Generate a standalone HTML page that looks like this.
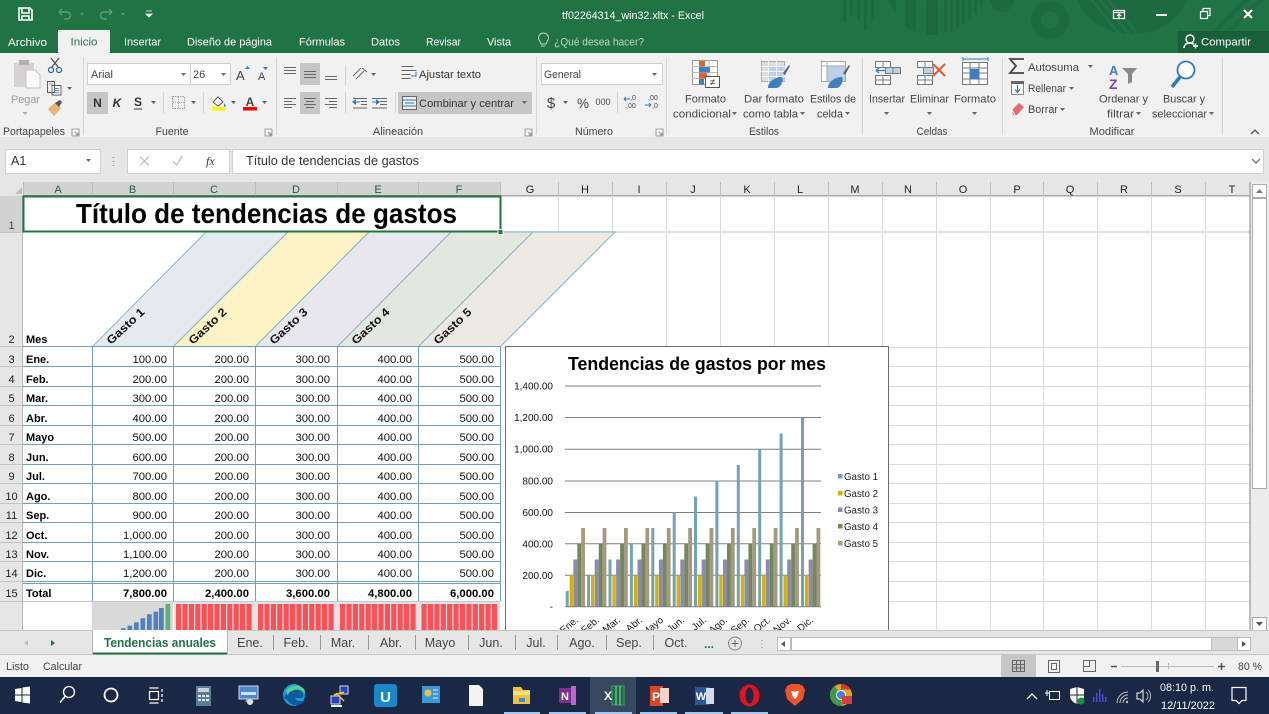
<!DOCTYPE html>
<html lang="es"><head><meta charset="utf-8"><title>Excel</title>
<style>
html,body{margin:0;padding:0;background:#fff;overflow:hidden}
svg{display:block;font-family:"Liberation Sans",Arial,sans-serif}
.r{font-size:11px;fill:#444}
.w{font-size:11px;fill:#fff}
.h{font-size:11px;fill:#222;text-anchor:middle}
.hs{font-size:11px;fill:#1d5f3b;text-anchor:middle}
.n{font-size:11.3px;fill:#111;text-anchor:end}
.b{font-size:11.3px;fill:#000;text-anchor:end;font-weight:bold}
.l{font-size:11px;fill:#000;font-weight:bold}
.g{font-size:11.5px;fill:#111;font-weight:bold}
.y{font-size:10px;fill:#111;text-anchor:end}
.c{font-size:10px;fill:#222;text-anchor:end}
.t{font-size:12.5px;fill:#444;text-anchor:middle}
.s{fill:none;stroke:#7a7a7a;stroke-width:1}
.bl{fill:none;stroke:#2b7cc0;stroke-width:1.2}
</style></head><body>
<svg width="1269" height="714" viewBox="0 0 1269 714" xmlns="http://www.w3.org/2000/svg">
<defs>
<path id="dd" d="M0 0h5l-2.500 3z" fill="#666"/>
<path id="lau" d="M0 0h7v7h-7zM3 3l3 3M6 3.500v2.500h-2.500" fill="none" stroke="#888" stroke-width=".8"/>
<g id="m">
<rect x="3.900" width="3.400" y="575.200" height="31.500" fill="#d4b200"/>
<rect x="7.600" width="4" y="559.500" height="47.200" fill="#8f8aab"/>
<rect x="11.600" width="3.900" y="543.700" height="63" fill="#728860"/>
<rect x="15.500" width="3.800" y="528" height="78.700" fill="#a59a7a"/>
</g>
<g id="rb"><rect width="5.200" y="604" height="26" fill="#fa5057"/></g>
<g id="rbs">
<use href="#rb"/><use href="#rb" x="6.400"/><use href="#rb" x="12.800"/><use href="#rb" x="19.200"/><use href="#rb" x="25.600"/><use href="#rb" x="32"/><use href="#rb" x="38.400"/><use href="#rb" x="44.800"/><use href="#rb" x="51.200"/><use href="#rb" x="57.600"/><use href="#rb" x="64"/><use href="#rb" x="70.400"/>
</g>
</defs>

<!-- title bar -->
<rect width="1269" height="53" fill="#217346"/>
<g fill="#1e6a40">
<rect x="843" width="3" height="22"/><rect x="850" width="3" height="15"/><rect x="857" width="3" height="20"/><rect x="864" width="3" height="30"/><rect x="871" width="3" height="18"/>
<path d="M888 0l8 13V0zM905 0h11v32l-11-5z"/>
<rect x="926" width="12" height="35" rx="2"/>
<rect x="944" width="3" height="32"/><rect x="950" width="3" height="31"/><rect x="956" width="3" height="28"/><rect x="962" width="3" height="24"/><rect x="968" width="3" height="20"/><rect x="974" width="3" height="14"/><rect x="980" width="2" height="6"/>
<circle cx="1002" cy="0" r="12"/>
<path d="M1077 0a58 50 0 0 0 110 0z"/>
<path d="M1190 53l53-53h6l-53 53zM1204 53l53-53h6l-53 53z" opacity=".9"/>
</g>
<circle cx="1050" cy="20" r="14" fill="none" stroke="#1e6a40" stroke-width="10"/>
<path d="M1092 0l32 40M1100 0l32 38M1108 0l30 34" stroke="#217346" stroke-width="2.500" fill="none"/>
<rect x="1178" y="31" width="91" height="22" fill="#19603a"/>
<!-- QAT -->
<g fill="none" stroke="#fff" stroke-width="1.600"><path d="M19 8h11l2 2v10H19z"/><path d="M22 8v5h7V8M22 20v-4h7v4"/></g>
<g fill="none" stroke="#5d9a78" stroke-width="1.500"><path d="M59 12l3-3M59 12l3 3M59 12h8a3.500 3.500 0 0 1 0 7h-3"/><path d="M112 12l-3-3M112 12l-3 3M112 12h-8a3.500 3.500 0 0 0 0 7h3"/></g>
<path d="M80 13h4l-2 2.500zM121 13h4l-2 2.500z" fill="#5d9a78"/>
<path d="M146 11h6M146 14h6l-3 3z" stroke="#fff" fill="#fff" stroke-width=".8"/>
<text x="562" y="19" class="w" textLength="142" lengthAdjust="spacingAndGlyphs">tf02264314_win32.xltx - Excel</text>
<!-- window controls -->
<g fill="none" stroke="#fff" stroke-width="1.200"><rect x="1113.500" y="10.500" width="11" height="8"/><path d="M1113 12.500h12M1119 18v-4M1117 16l2-2 2 2"/><path d="M1156 15h11" stroke-width="1.800"/><rect x="1200.500" y="11.500" width="7" height="7"/><path d="M1203 11v-2.500h7v7h-2"/></g>
<path d="M1244 10l8 8M1252 10l-8 8" stroke="#fff" stroke-width="2"/>
<!-- tabs -->
<rect x="58" y="30" width="52" height="23" fill="#f1f1f1"/>
<text x="8" y="46" class="w" textLength="39" lengthAdjust="spacingAndGlyphs">Archivo</text>
<text x="70.500" y="45.500" style="font-size:11px;fill:#217346" textLength="27" lengthAdjust="spacingAndGlyphs">Inicio</text>
<text x="124" y="45.500" class="w" textLength="37" lengthAdjust="spacingAndGlyphs">Insertar</text>
<text x="187" y="45.500" class="w" textLength="85" lengthAdjust="spacingAndGlyphs">Diseño de página</text>
<text x="299" y="45.500" class="w" textLength="46" lengthAdjust="spacingAndGlyphs">Fórmulas</text>
<text x="371" y="45.500" class="w" textLength="29" lengthAdjust="spacingAndGlyphs">Datos</text>
<text x="426" y="45.500" class="w" textLength="35" lengthAdjust="spacingAndGlyphs">Revisar</text>
<text x="487" y="45.500" class="w" textLength="24" lengthAdjust="spacingAndGlyphs">Vista</text>
<path d="M541 46h4M541 44c0-2-2.500-3-2.500-6a5 5 0 0 1 10 0c0 3-2.500 4-2.500 6z" fill="none" stroke="#bcd5c6" stroke-width="1"/>
<text x="554" y="45.500" style="font-size:11px;fill:#bcd5c6" textLength="90" lengthAdjust="spacingAndGlyphs">¿Qué desea hacer?</text>
<g fill="none" stroke="#fff" stroke-width="1.400"><circle cx="1190" cy="39" r="4"/><path d="M1184 48c0-3 2-5 6-5 2 0 3 .5 4 1.500M1193 46h5M1195.500 43.500v5"/></g>
<text x="1201" y="45.500" class="w" textLength="50" lengthAdjust="spacingAndGlyphs">Compartir</text>

<!-- ribbon -->
<rect y="53" width="1269" height="85" fill="#f1f1f1"/>
<rect y="137" width="1269" height="45" fill="#e6e6e6"/>
<path d="M83.500 57v78M276.500 57v78M536.500 57v78M666.500 57v78M862.500 57v78M1002.500 57v78M1222.500 57v78" stroke="#d5d5d5"/>
<!-- clipboard -->
<rect x="14" y="63" width="20" height="24" fill="#d6d2d2" rx="1"/><rect x="19" y="60" width="10" height="5" fill="#b4afaf"/>
<path d="M26 70h9l5 5v13H26z" fill="#fafafa" stroke="#c4c4c4"/>
<text x="11" y="103" style="font-size:11px;fill:#999" textLength="29" lengthAdjust="spacingAndGlyphs">Pegar</text>
<use href="#dd" x="22.500" y="112" opacity=".5"/>
<g fill="none" stroke="#2b6db0" stroke-width="1.300"><circle cx="51" cy="70" r="2.500"/><circle cx="59" cy="70" r="2.500"/></g><path d="M51.500 67.500L59 58M58.500 67.500L51 58" stroke="#555" stroke-width="1.300"/>
<path d="M47.500 81.500h7v11h-7zM52 85.500h9v9.500h-9z" fill="#fff" stroke="#555" stroke-width=".9"/><path d="M54 88.500h5M54 90.500h5M54 92.500h5M49 84h4" stroke="#2b6db0" stroke-width=".7"/>
<use href="#dd" x="67" y="87"/>
<path d="M48 109l8-7 5 6-7 8z" fill="#e8b573"/><path d="M55 103l5-3 2 2-3 5z" fill="#555"/>
<text x="3" y="135" class="r" textLength="62" lengthAdjust="spacingAndGlyphs">Portapapeles</text>
<use href="#lau" x="72" y="129"/>
<!-- font -->
<rect x="87.500" y="63.500" width="103" height="21" fill="#fff" stroke="#d0d0d0"/><rect x="190.500" y="63.500" width="40" height="21" fill="#fff" stroke="#d0d0d0"/>
<text x="91" y="78" class="r" textLength="22" lengthAdjust="spacingAndGlyphs">Arial</text><use href="#dd" x="181" y="73"/>
<text x="193" y="78" class="r">26</text><use href="#dd" x="221" y="73"/>
<text x="236" y="80" style="font-size:13px;fill:#444">A</text><path d="M245 69h5l-2.500-3z" fill="#2b7cc0"/>
<text x="258" y="80" style="font-size:11px;fill:#444">A</text><path d="M263 67h5l-2.500 3z" fill="#2b7cc0"/>
<rect x="87" y="92" width="21" height="22" fill="#c6c6c6"/>
<text x="97.500" y="107" style="font-size:12px;font-weight:bold;fill:#333;text-anchor:middle">N</text>
<text x="117" y="107" style="font-size:12px;font-weight:bold;font-style:italic;fill:#333;text-anchor:middle">K</text>
<text x="138" y="106" style="font-size:12px;font-weight:bold;fill:#333;text-anchor:middle">S</text><path d="M134 109h8" stroke="#333"/>
<use href="#dd" x="151" y="101"/><path d="M163.500 92v21M203.500 92v21" stroke="#d5d5d5"/>
<rect x="172.500" y="96.500" width="12" height="12" fill="none" stroke="#999" stroke-dasharray="1.500 1"/><path d="M178.500 97v11M173 102.500h11" stroke="#aaa" stroke-dasharray="1 1"/>
<use href="#dd" x="191" y="101"/>
<path d="M213 102l5-5 5 5-5 4z" fill="#fff" stroke="#555"/><path d="M224 103l2 3-2 1z" fill="#2b7cc0"/>
<rect x="212" y="107" width="14" height="3.500" fill="#ff0"/>
<use href="#dd" x="231" y="101"/>
<text x="250" y="106" style="font-size:12px;font-weight:bold;fill:#444;text-anchor:middle">A</text>
<rect x="243" y="107" width="14" height="3.500" fill="#f00"/>
<use href="#dd" x="262" y="101"/>
<text x="172" y="135" class="t" style="font-size:11px" textLength="33" lengthAdjust="spacingAndGlyphs">Fuente</text>
<use href="#lau" x="265" y="129"/>
<!-- alignment -->
<rect x="300" y="63" width="20" height="22" fill="#c6c6c6"/><rect x="300" y="92" width="20" height="22" fill="#c6c6c6"/>
<g stroke="#666" stroke-width="1" fill="none">
<path d="M284 67.500h12M284 70.500h12M284 73.500h12"/>
<path d="M304 71.500h12M304 74.500h12M304 77.500h12"/>
<path d="M325 76.500h12M325 79.500h12"/>
<path d="M284 98.500h12M284 101.500h8M284 104.500h12M284 107.500h8"/>
<path d="M304 98.500h12M306 101.500h8M304 104.500h12M306 107.500h8"/>
<path d="M325 98.500h12M329 101.500h8M325 104.500h12M329 107.500h8"/>
<path d="M353 76l8-8M356 79l8-8M362 68l5 4" />
<path d="M361 98.500h6M361 101.500h6M361 104.500h6M353 108h14M353 98.500h14"/>
<path d="M380 98.500h7M380 101.500h7M380 104.500h7M372 108h15M372 98.500h15"/>
<path d="M345.500 65v20M345.500 92v21M395.500 92v21" stroke="#d5d5d5"/>
</g>
<path d="M352 102l4-3v6zM356 101.500h4v1h-4zM372 101.500h4v1h-4zM380 102l-4-3v6z" fill="#2b7cc0"/>
<use href="#dd" x="371" y="73"/>
<g fill="none" stroke="#666"><path d="M401.500 66.500h12M401.500 70.500h15M401.500 74.500h9M401.500 78.500h9" /><path d="M411 76h5v-4" stroke="#2b7cc0"/></g>
<text x="419" y="78" style="font-size:11px;fill:#333" textLength="62" lengthAdjust="spacingAndGlyphs">Ajustar texto</text>
<rect x="398" y="92" width="134" height="22" fill="#c6c6c6"/>
<rect x="402.500" y="96.500" width="14" height="13" fill="#eee" stroke="#666"/><path d="M403 100h13M403 106h13M405 103h9" stroke="#2b7cc0" fill="none"/>
<text x="419" y="107" style="font-size:11px;fill:#333" textLength="95" lengthAdjust="spacingAndGlyphs">Combinar y centrar</text>
<use href="#dd" x="522" y="101" />
<text x="398" y="135" class="t" style="font-size:11px" textLength="50" lengthAdjust="spacingAndGlyphs">Alineación</text>
<use href="#lau" x="525" y="129"/>
<!-- number -->
<rect x="541.500" y="63.500" width="121" height="21" fill="#fff" stroke="#d0d0d0"/>
<text x="544" y="78" class="r" textLength="37" lengthAdjust="spacingAndGlyphs">General</text><use href="#dd" x="652" y="73"/>
<text x="551" y="108" style="font-size:15px;fill:#444;text-anchor:middle">$</text><use href="#dd" x="563" y="101"/>
<text x="583" y="108" style="font-size:13.500px;fill:#444;text-anchor:middle">%</text>
<text x="603" y="105" style="font-size:9px;fill:#444;text-anchor:middle">000</text>
<path d="M617.500 92v21" stroke="#d5d5d5"/>
<text x="630" y="100" style="font-size:7px;fill:#444">,0</text><text x="626" y="108" style="font-size:7px;fill:#444">,00</text><path d="M624 99h6M624 99l2-2M624 99l2 2" stroke="#2b7cc0" fill="none"/>
<text x="648" y="100" style="font-size:7px;fill:#444">,00</text><text x="652" y="108" style="font-size:7px;fill:#444">,0</text><path d="M645 105h6M651 105l-2-2M651 105l-2 2" stroke="#2b7cc0" fill="none"/>
<text x="594" y="135" class="t" style="font-size:11px" textLength="38" lengthAdjust="spacingAndGlyphs">Número</text>
<use href="#lau" x="656" y="129"/>
<!-- styles -->
<rect x="692.500" y="60.500" width="25" height="24" fill="#fff" stroke="#999"/>
<path d="M700 60.500v24M709 60.500v24M692 66.500h25M692 72.500h25M692 78.500h25" stroke="#bbb" fill="none"/>
<rect x="699" y="61" width="6" height="5.500" fill="#e0622f"/><rect x="699" y="67" width="11" height="5.500" fill="#3f7fbf"/><rect x="699" y="73" width="8" height="5.500" fill="#e0622f"/><rect x="699" y="79" width="5" height="5.500" fill="#3f7fbf"/>
<rect x="705.500" y="76.500" width="14" height="11" fill="#fff" stroke="#555"/><text x="712.500" y="85.500" style="font-size:10px;fill:#333;text-anchor:middle">≠</text>
<rect x="761.500" y="61.500" width="23" height="20" fill="#ddd" stroke="#aaa"/><rect x="769" y="67" width="16" height="14" fill="#bdd0e6"/><path d="M761 66.500h24M761 71.500h24M761 76.500h24M768.500 61v21M776.500 61v21" stroke="#fff" stroke-width=".7"/>
<path d="M783 73l6-8 1 1-5 9z" fill="#666"/><path d="M768 88c0-7 8-11 14-11 2 3-1 11-6 11z" fill="#3f7fbf"/>
<rect x="821.500" y="61.500" width="24" height="20" fill="#fff" stroke="#aaa"/><rect x="827" y="66" width="18" height="15" fill="#bdd0e6"/><path d="M821 66h25M827 61v20" stroke="#aaa"/>
<path d="M843 73l6-8 1 1-5 9z" fill="#666"/><path d="M828 88c0-7 8-11 14-11 2 3-1 11-6 11z" fill="#3f7fbf"/>
<g style="font-size:11px;fill:#444">
<text x="685" y="102.500" textLength="41" lengthAdjust="spacingAndGlyphs">Formato</text>
<text x="673" y="117.500" textLength="58" lengthAdjust="spacingAndGlyphs">condicional</text>
<text x="744" y="102.500" textLength="60" lengthAdjust="spacingAndGlyphs">Dar formato</text>
<text x="743" y="117.500" textLength="55" lengthAdjust="spacingAndGlyphs">como tabla</text>
<text x="810" y="102.500" textLength="46" lengthAdjust="spacingAndGlyphs">Estilos de</text>
<text x="817" y="117.500" textLength="26" lengthAdjust="spacingAndGlyphs">celda</text>
<text x="869" y="102.500" textLength="36" lengthAdjust="spacingAndGlyphs">Insertar</text>
<text x="910" y="102.500" textLength="39" lengthAdjust="spacingAndGlyphs">Eliminar</text>
<text x="954" y="102.500" textLength="42" lengthAdjust="spacingAndGlyphs">Formato</text>
<text x="1028" y="71" textLength="51" lengthAdjust="spacingAndGlyphs">Autosuma</text>
<text x="1028" y="92" textLength="38" lengthAdjust="spacingAndGlyphs">Rellenar</text>
<text x="1028" y="113" textLength="30" lengthAdjust="spacingAndGlyphs">Borrar</text>
<text x="1099" y="102.500" textLength="49" lengthAdjust="spacingAndGlyphs">Ordenar y</text>
<text x="1107" y="117.500" textLength="27" lengthAdjust="spacingAndGlyphs">filtrar</text>
<text x="1163" y="102.500" textLength="42" lengthAdjust="spacingAndGlyphs">Buscar y</text>
<text x="1152" y="117.500" textLength="55" lengthAdjust="spacingAndGlyphs">seleccionar</text>
</g>
<use href="#dd" x="732" y="112"/><use href="#dd" x="800" y="112"/><use href="#dd" x="845" y="112"/>
<use href="#dd" x="884" y="112"/><use href="#dd" x="927" y="112"/><use href="#dd" x="972" y="112"/>
<use href="#dd" x="1088" y="65"/><use href="#dd" x="1069" y="87"/><use href="#dd" x="1060" y="108"/>
<use href="#dd" x="1136" y="112"/><use href="#dd" x="1209" y="112"/>
<text x="764" y="135" class="t" style="font-size:11px" textLength="30" lengthAdjust="spacingAndGlyphs">Estilos</text>
<text x="932" y="135" class="t" style="font-size:11px" textLength="31" lengthAdjust="spacingAndGlyphs">Celdas</text>
<text x="1112" y="135" class="t" style="font-size:11px" textLength="45" lengthAdjust="spacingAndGlyphs">Modificar</text>
<path d="M1251 134l4-4 4 4" fill="none" stroke="#555" stroke-width="1.300"/>
<!-- cells icons -->
<g fill="#fff" stroke="#777"><rect x="875.500" y="61.500" width="15" height="6"/><path d="M883 61.500v6"/><rect x="875.500" y="75.500" width="15" height="9"/><path d="M883 75.500v9M875.500 80h15"/><rect x="885.500" y="67.500" width="15" height="6" fill="#bdd0e6"/><path d="M893 67.500v6"/>
<rect x="917.500" y="61.500" width="15" height="6"/><path d="M925 61.500v6"/><rect x="917.500" y="75.500" width="15" height="9"/><path d="M925 75.500v9M917.500 80h15"/><rect x="923.500" y="67.500" width="10" height="6" fill="#bdd0e6"/>
<rect x="962.500" y="62.500" width="25" height="22"/><path d="M970 62.500v22M979 62.500v22M962.500 68h25M962.500 73h25M962.500 79h25"/></g>
<path d="M873 70.500h9M873 70.500l3-2.500M873 70.500l3 2.500" stroke="#2b7cc0" fill="none" stroke-width="1.300" transform="translate(3)"/>
<path d="M933 64l12 12M945 64l-12 12" stroke="#e0592f" stroke-width="2"/>
<rect x="970" y="69" width="9" height="10" fill="#3f7fbf"/><path d="M963 59h25M963 57v4M988 57v4" stroke="#2b7cc0"/>
<!-- edit icons -->
<path d="M1024 59h-14l6 7-6 7h14" fill="none" stroke="#444" stroke-width="1.800"/>
<rect x="1011.500" y="81.500" width="12" height="13" fill="#fff" stroke="#888"/><rect x="1011" y="81" width="13" height="3" fill="#666"/><path d="M1017.500 85v7M1015 89.500l2.500 3 2.500-3" stroke="#2b7cc0" fill="none" stroke-width="1.200"/>
<path d="M1012 110l7-7 5 4-7 8h-4z" fill="#e86a6f"/><path d="M1012 110l3 5" stroke="#fff"/>
<text x="1109" y="75" style="font-size:13px;fill:#3f7fbf;font-weight:bold">A</text><text x="1109" y="89" style="font-size:14px;fill:#7a3fb5;font-weight:bold">Z</text>
<path d="M1122 68h15l-5 6v8l-4 2v-10z" fill="#8a8a8a"/>
<circle cx="1186" cy="70" r="8.500" fill="#fff" stroke="#2b7cc0" stroke-width="1.800"/><path d="M1180 77l-8 10" stroke="#2b7cc0" stroke-width="3.500"/>

<!-- formula bar -->
<rect x="5.500" y="149.500" width="95" height="24" fill="#fff" stroke="#d0d0d0"/>
<text x="11" y="165" style="font-size:12.500px;fill:#333">A1</text><use href="#dd" x="86" y="159" />
<path d="M113.500 157v1M113.500 161v1M113.500 165v1" stroke="#999" stroke-width="1.500"/>
<rect x="127.500" y="149.500" width="102" height="24" fill="#fff" stroke="#d0d0d0"/>
<path d="M140 156.500l9 9M149 156.500l-9 9" stroke="#bbb" stroke-width="1.200"/>
<path d="M173 161l3.500 4 6-9" stroke="#bbb" stroke-width="1.200" fill="none"/>
<text x="206" y="165" style="font-size:12px;font-style:italic;font-family:'Liberation Serif',serif;fill:#333">fx</text>
<rect x="232.500" y="149.500" width="1031" height="24" fill="#fff" stroke="#d0d0d0"/>
<text x="246" y="165" style="font-size:12.500px;fill:#333" textLength="173" lengthAdjust="spacingAndGlyphs">Título de tendencias de gastos</text>
<path d="M1252 159l4 4 4-4" fill="none" stroke="#666" stroke-width="1.200"/>

<!-- grid -->
<rect y="182" width="1269" height="14.500" fill="#e6e6e6"/>
<rect y="196" width="23" height="434" fill="#e6e6e6"/>
<rect x="1250" y="182" width="19" height="449" fill="#ececec"/>
<rect x="23" y="196" width="1227" height="434" fill="#fff"/>
<rect x="23" y="182" width="477" height="14" fill="#d2d2d2"/><rect y="196" width="23" height="36" fill="#d2d2d2"/>
<path d="M15 194h7v-7z" fill="#c0c0c0"/>
<path d="M23.500 196h1226M500 195.500h750" stroke="#a8a8a8"/>
<path d="M23 195.500h477" stroke="#8a8a8a"/>
<path d="M23.500 182v14M92.500 182v14M173.500 182v14M255.500 182v14M337.500 182v14M418.500 182v14M500.500 182v14M558.500 182v14M612.500 182v14M666.500 182v14M720.500 182v14M774.500 182v14M828.500 182v14M882.500 182v14M936.500 182v14M990.500 182v14M1043.500 182v14M1097.500 182v14M1151.500 182v14M1205.500 182v14" stroke="#bdbdbd"/>
<g stroke="#dcdcdc" fill="none">
<path d="M558.500 196v36M612.500 196v36M666.500 196v434M720.500 196v434M774.500 196v434M828.500 196v434M882.500 196v434M936.500 196v434M990.500 196v434M1043.500 196v434M1097.500 196v434M1151.500 196v434M1205.500 196v434"/>
<path d="M500 232h750" stroke="#e0e0e0" stroke-width="2"/>
<path d="M500 347.500h750M888 366.500h362M888 386.500h362M888 405.500h362M888 425.500h362M888 444.500h362M888 464.500h362M888 483.500h362M888 503.500h362M888 522.500h362M888 542.500h362M888 561.500h362M888 581.500h362M888 601.500h362"/>
</g>
<path d="M1250 182v449" stroke="#a8a8a8" stroke-width="1.500"/>
<!-- row headers -->
<path d="M0 232.500h23M0 346.500h23M0 366.500h23M0 386.500h23M0 405.500h23M0 425.500h23M0 444.500h23M0 464.500h23M0 483.500h23M0 503.500h23M0 522.500h23M0 542.500h23M0 561.500h23M0 581.500h23M0 601.500h23" stroke="#c4c4c4"/>
<path d="M22.500 196v434" stroke="#b5b5b5"/>
<g class="h">
<text class="hs" x="58" y="193">A</text><text class="hs" x="132.500" y="193">B</text><text class="hs" x="214" y="193">C</text><text class="hs" x="296" y="193">D</text><text class="hs" x="378" y="193">E</text><text class="hs" x="459" y="193">F</text>
<text class="h" x="530" y="193">G</text><text class="h" x="585" y="193">H</text><text class="h" x="639" y="193">I</text><text class="h" x="693" y="193">J</text><text class="h" x="747" y="193">K</text><text class="h" x="800" y="193">L</text><text class="h" x="855" y="193">M</text><text class="h" x="908" y="193">N</text><text class="h" x="963" y="193">O</text><text class="h" x="1017" y="193">P</text><text class="h" x="1070" y="193">Q</text><text class="h" x="1124" y="193">R</text><text class="h" x="1178" y="193">S</text><text class="h" x="1232" y="193">T</text>
<text class="hs" x="11.500" y="229">1</text><text class="h" x="11.500" y="343">2</text><text class="h" x="11.500" y="363">3</text><text class="h" x="11.500" y="383">4</text><text class="h" x="11.500" y="402">5</text><text class="h" x="11.500" y="422">6</text><text class="h" x="11.500" y="441">7</text><text class="h" x="11.500" y="461">8</text><text class="h" x="11.500" y="480">9</text><text class="h" x="11.500" y="500">10</text><text class="h" x="11.500" y="519">11</text><text class="h" x="11.500" y="539">12</text><text class="h" x="11.500" y="558">13</text><text class="h" x="11.500" y="577">14</text><text class="h" x="11.500" y="597">15</text>
</g>
<!-- parallelograms -->
<g stroke="#8eb4c2" stroke-width="1">
<path d="M92.500 346.500L206 232h82L173.500 346.500z" fill="#e4ebee"/>
<path d="M173.500 346.500L288 232h81L255.500 346.500z" fill="#fcf3c4"/>
<path d="M255.500 346.500L369 232h82L337.500 346.500z" fill="#e8e7ee"/>
<path d="M337.500 346.500L451 232h82L418.500 346.500z" fill="#e3e7df"/>
<path d="M418.500 346.500L533 232h82L500.500 346.500z" fill="#edeae3"/>
</g>
<text class="g" transform="translate(111 345) rotate(-43)" textLength="47" lengthAdjust="spacingAndGlyphs">Gasto 1</text>
<text class="g" transform="translate(193 345) rotate(-43)" textLength="47" lengthAdjust="spacingAndGlyphs">Gasto 2</text>
<text class="g" transform="translate(274 345) rotate(-43)" textLength="47" lengthAdjust="spacingAndGlyphs">Gasto 3</text>
<text class="g" transform="translate(356 345) rotate(-43)" textLength="47" lengthAdjust="spacingAndGlyphs">Gasto 4</text>
<text class="g" transform="translate(438 345) rotate(-43)" textLength="47" lengthAdjust="spacingAndGlyphs">Gasto 5</text>
<!-- table lines -->
<g stroke="#6fa1b3" fill="none">
<path d="M23 346.500h477M23 366.500h477M23 386.500h477M23 405.500h477M23 425.500h477M23 444.500h477M23 464.500h477M23 483.500h477M23 503.500h477M23 522.500h477M23 542.500h477M23 561.500h477M23 581.500h477M23 583.500h477"/>
<path d="M23 601.500h477" stroke="#b7c9cf"/>
<path d="M92.500 347v254M173.500 347v254M255.500 347v254M337.500 347v254M418.500 347v254M500.500 347v254"/>
</g>
<g class="l">
<text x="26" y="343">Mes</text><text x="26" y="363">Ene.</text><text x="26" y="383">Feb.</text><text x="26" y="402">Mar.</text><text x="26" y="422">Abr.</text><text x="26" y="441">Mayo</text><text x="26" y="461">Jun.</text><text x="26" y="480">Jul.</text><text x="26" y="500">Ago.</text><text x="26" y="519">Sep.</text><text x="26" y="539">Oct.</text><text x="26" y="558">Nov.</text><text x="26" y="577">Dic.</text><text x="26" y="597">Total</text>
</g>
<g class="n">
<text x="167" y="363">100.00</text><text x="249" y="363">200.00</text><text x="330" y="363">300.00</text><text x="412" y="363">400.00</text><text x="494" y="363">500.00</text>
<text x="167" y="383">200.00</text><text x="249" y="383">200.00</text><text x="330" y="383">300.00</text><text x="412" y="383">400.00</text><text x="494" y="383">500.00</text>
<text x="167" y="402">300.00</text><text x="249" y="402">200.00</text><text x="330" y="402">300.00</text><text x="412" y="402">400.00</text><text x="494" y="402">500.00</text>
<text x="167" y="422">400.00</text><text x="249" y="422">200.00</text><text x="330" y="422">300.00</text><text x="412" y="422">400.00</text><text x="494" y="422">500.00</text>
<text x="167" y="441">500.00</text><text x="249" y="441">200.00</text><text x="330" y="441">300.00</text><text x="412" y="441">400.00</text><text x="494" y="441">500.00</text>
<text x="167" y="461">600.00</text><text x="249" y="461">200.00</text><text x="330" y="461">300.00</text><text x="412" y="461">400.00</text><text x="494" y="461">500.00</text>
<text x="167" y="480">700.00</text><text x="249" y="480">200.00</text><text x="330" y="480">300.00</text><text x="412" y="480">400.00</text><text x="494" y="480">500.00</text>
<text x="167" y="500">800.00</text><text x="249" y="500">200.00</text><text x="330" y="500">300.00</text><text x="412" y="500">400.00</text><text x="494" y="500">500.00</text>
<text x="167" y="519">900.00</text><text x="249" y="519">200.00</text><text x="330" y="519">300.00</text><text x="412" y="519">400.00</text><text x="494" y="519">500.00</text>
<text x="167" y="539">1,000.00</text><text x="249" y="539">200.00</text><text x="330" y="539">300.00</text><text x="412" y="539">400.00</text><text x="494" y="539">500.00</text>
<text x="167" y="558">1,100.00</text><text x="249" y="558">200.00</text><text x="330" y="558">300.00</text><text x="412" y="558">400.00</text><text x="494" y="558">500.00</text>
<text x="167" y="577">1,200.00</text><text x="249" y="577">200.00</text><text x="330" y="577">300.00</text><text x="412" y="577">400.00</text><text x="494" y="577">500.00</text>
</g>
<g class="b">
<text x="167" y="597">7,800.00</text><text x="249" y="597">2,400.00</text><text x="330" y="597">3,600.00</text><text x="412" y="597">4,800.00</text><text x="494" y="597">6,000.00</text>
</g>
<!-- title cell -->
<rect x="23.500" y="196.500" width="477" height="35" fill="#fff" stroke="#217346" stroke-width="2"/>
<rect x="498" y="229.500" width="5" height="5" fill="#217346" stroke="#fff"/>
<text x="76" y="223" style="font-size:27.500px;font-weight:bold;fill:#000" textLength="381" lengthAdjust="spacingAndGlyphs">Título de tendencias de gastos</text>
<!-- sparklines -->
<rect x="92" y="602" width="81" height="29" fill="#d9d9d9"/><rect x="174" y="602" width="326" height="29" fill="#e3e3e3"/>
<g fill="#4f81bd"><rect x="121" y="628.300" width="4.700" height="2"/><rect x="127.500" y="625.700" width="4.700" height="5"/><rect x="134" y="622.300" width="4.700" height="8"/><rect x="140.500" y="618.300" width="4.700" height="12"/><rect x="147" y="614.300" width="4.700" height="16"/><rect x="153.500" y="611.700" width="4.700" height="19"/><rect x="159" y="608" width="4.700" height="22"/></g>
<rect x="165.500" y="604" width="4.700" height="26" fill="#5fb16f"/>
<use href="#rbs" x="176"/><use href="#rbs" x="258"/><use href="#rbs" x="340"/><use href="#rbs" x="421.500"/>

<!-- chart -->
<rect x="505.500" y="346.500" width="383" height="290" fill="#fff" stroke="#6e6e6e"/>
<text x="568" y="370" style="font-size:18.500px;font-weight:bold;fill:#000" textLength="258" lengthAdjust="spacingAndGlyphs">Tendencias de gastos por mes</text>
<path d="M565 386h256M565 417.500h256M565 449.300h256M565 481h256M565 512.500h256M565 543.800h256M565 575.200h256" stroke="#7f7f7f" stroke-width="1"/>
<g class="y"><text x="553" y="389.500">1,400.00</text><text x="553" y="421">1,200.00</text><text x="553" y="452.500">1,000.00</text><text x="553" y="484.500">800.00</text><text x="553" y="516">600.00</text><text x="553" y="547.500">400.00</text><text x="553" y="579">200.00</text><text x="553" y="610">-</text></g>
<g fill="#6fa3b5">
<rect x="565.700" y="591" width="3" height="15.700"/><rect x="587.100" y="575.200" width="3" height="31.500"/><rect x="608.500" y="559.500" width="3" height="47.200"/><rect x="629.900" y="543.700" width="3" height="63"/><rect x="651.300" y="528" width="3" height="78.700"/><rect x="672.700" y="512.200" width="3" height="94.500"/><rect x="694" y="496.500" width="3" height="110.200"/><rect x="715.400" y="480.700" width="3" height="126"/><rect x="736.800" y="465" width="3" height="141.700"/><rect x="758.200" y="449.200" width="3" height="157.500"/><rect x="779.600" y="433.500" width="3" height="173.200"/><rect x="801" y="417.700" width="3" height="189"/>
</g>
<use href="#m" x="565.700"/><use href="#m" x="587.100"/><use href="#m" x="608.500"/><use href="#m" x="629.900"/><use href="#m" x="651.300"/><use href="#m" x="672.700"/><use href="#m" x="694"/><use href="#m" x="715.400"/><use href="#m" x="736.800"/><use href="#m" x="758.200"/><use href="#m" x="779.600"/><use href="#m" x="801"/>
<path d="M565 606.700h256" stroke="#7f7f7f"/>
<g class="c">
<text transform="translate(579 621) rotate(-40)">Ene.</text><text transform="translate(600 621) rotate(-40)">Feb.</text><text transform="translate(621 621) rotate(-40)">Mar.</text><text transform="translate(643 621) rotate(-40)">Abr.</text><text transform="translate(664 621) rotate(-40)">Mayo</text><text transform="translate(685 621) rotate(-40)">Jun.</text><text transform="translate(707 621) rotate(-40)">Jul.</text><text transform="translate(728 621) rotate(-40)">Ago.</text><text transform="translate(750 621) rotate(-40)">Sep.</text><text transform="translate(771 621) rotate(-40)">Oct.</text><text transform="translate(792 621) rotate(-40)">Nov.</text><text transform="translate(814 621) rotate(-40)">Dic.</text>
</g>
<rect x="838" y="474" width="4.500" height="4.500" fill="#6fa3b5"/><rect x="838" y="491" width="4.500" height="4.500" fill="#d4b200"/><rect x="838" y="507.500" width="4.500" height="4.500" fill="#8f8aab"/><rect x="838" y="524" width="4.500" height="4.500" fill="#728860"/><rect x="838" y="541" width="4.500" height="4.500" fill="#a59a7a"/>
<g style="font-size:10px;fill:#222">
<text x="844" y="480" textLength="34" lengthAdjust="spacingAndGlyphs">Gasto 1</text><text x="844" y="497" textLength="34" lengthAdjust="spacingAndGlyphs">Gasto 2</text><text x="844" y="513.500" textLength="34" lengthAdjust="spacingAndGlyphs">Gasto 3</text><text x="844" y="530" textLength="34" lengthAdjust="spacingAndGlyphs">Gasto 4</text><text x="844" y="547" textLength="34" lengthAdjust="spacingAndGlyphs">Gasto 5</text>
</g>
<!-- vertical scrollbar -->
<rect x="1252.500" y="184.500" width="14" height="13" fill="#fff" stroke="#ababab"/><path d="M1256 193h7l-3.500-4z" fill="#777"/>
<rect x="1252.500" y="198.500" width="14" height="290" fill="#fff" stroke="#ababab"/>
<rect x="1252.500" y="617.500" width="14" height="13" fill="#fff" stroke="#ababab"/><path d="M1256 622h7l-3.500 4z" fill="#555"/>

<!-- sheet tabs -->
<rect y="630" width="1269" height="25" fill="#e6e6e6"/>
<path d="M0 630.500h1269M0 654.500h1269" stroke="#c4c4c4"/>
<path d="M24 643l4-3v6z" fill="#bdbdbd"/><path d="M55 643l-4-3v6z" fill="#217346"/>
<rect x="93" y="630" width="134" height="24" fill="#fff"/><path d="M93 653.500h134" stroke="#217346" stroke-width="2"/><path d="M92.500 630v24M227.500 630v24" stroke="#bbb"/>
<text x="104" y="647" style="font-size:12.500px;font-weight:bold;fill:#217346" textLength="112" lengthAdjust="spacingAndGlyphs">Tendencias anuales</text>
<path d="M273.500 635v15M320.500 635v15M368.500 635v15M415.500 635v15M468.500 635v15M515.500 635v15M557.500 635v15M606.500 635v15M653.500 635v15" stroke="#9a9a9a"/>
<g class="t">
<text x="250" y="647">Ene.</text><text x="296" y="647">Feb.</text><text x="343" y="647">Mar.</text><text x="391" y="647">Abr.</text><text x="440" y="647">Mayo</text><text x="491" y="647">Jun.</text><text x="536" y="647">Jul.</text><text x="582" y="647">Ago.</text><text x="629" y="647">Sep.</text><text x="676" y="647">Oct.</text>
</g>
<text x="709" y="648" style="font-size:12px;font-weight:bold;fill:#217346;text-anchor:middle">...</text>
<circle cx="735" cy="643.500" r="6.500" fill="none" stroke="#888"/><path d="M731.500 643.500h7M735 640v7" stroke="#666"/>
<path d="M762 640v1M762 643.500v1M762 647v1" stroke="#aaa" stroke-width="1.500"/>
<rect x="777.500" y="637.500" width="473" height="13" fill="#d8d8d8" stroke="#bbb"/>
<rect x="777.500" y="637.500" width="13" height="13" fill="#fff" stroke="#bbb"/><path d="M781 644l4-3v6z" fill="#555"/>
<rect x="791.500" y="637.500" width="420" height="13" fill="#fff" stroke="#bbb"/>
<rect x="1237.500" y="637.500" width="13" height="13" fill="#fff" stroke="#bbb"/><path d="M1246 644l-4-3v6z" fill="#555"/>

<!-- status bar -->
<rect y="655" width="1269" height="22" fill="#f1f1f1"/>
<text x="6" y="670" class="r" textLength="23" lengthAdjust="spacingAndGlyphs">Listo</text>
<text x="43" y="670" class="r" textLength="39" lengthAdjust="spacingAndGlyphs">Calcular</text>
<rect x="1001" y="655" width="35" height="22" fill="#c6c6c6"/>
<g fill="none" stroke="#666"><rect x="1012.500" y="660.500" width="12" height="11"/><path d="M1016.500 660.500v11M1020.500 660.500v11M1012.500 664.500h12M1012.500 668h12"/>
<rect x="1048.500" y="660.500" width="11" height="12"/><rect x="1051.500" y="663.500" width="5" height="6"/>
<path d="M1083.500 660.500h12v11h-12zM1089.500 660.500v6h-6"/>
<path d="M1121 666.500h93" stroke="#bbb"/><path d="M1168.500 663v6" stroke="#bbb"/></g>
<path d="M1111 666.500h6M1218 666.500h7M1221.500 663v7" stroke="#555" stroke-width="1.500"/>
<rect x="1156" y="661" width="3" height="11" fill="#666"/>
<text x="1238" y="670" class="r" textLength="24" lengthAdjust="spacingAndGlyphs">80 %</text>

<!-- taskbar -->
<rect y="677" width="1269" height="37" fill="#1a2745"/>
<rect x="590" y="677" width="46" height="37" fill="#3a4760"/>
<path d="M504 712h36v2h-36zM549 712h37v2h-37zM595 712h37v2h-37zM640 712h37v2h-37zM685 712h38v2h-38zM731 712h37v2h-37z" fill="#a6c7ec"/>
<path d="M15 689l6.500-1v6.500H15zM22.500 687.500l7.500-1v8h-7.500zM15 695.500h6.500v6.500l-6.500-1zM22.500 695.500H30v8l-7.500-1z" fill="#fff"/>
<circle cx="69" cy="692" r="5.500" fill="none" stroke="#fff" stroke-width="1.300"/><path d="M65 696.500l-5 6" stroke="#fff" stroke-width="1.500"/>
<circle cx="111" cy="695" r="6.500" fill="none" stroke="#fff" stroke-width="1.800"/>
<path d="M149.500 688h9M149.500 703h9M149.500 691.500h9v8h-9zM162 689v3M162 694v3M162 699v3" stroke="#fff" fill="none" stroke-width="1.200"/>
<rect x="196" y="686" width="15" height="20" fill="#5c7e94"/><rect x="198" y="688" width="11" height="4" fill="#c5d4dd"/><path d="M198 695h3v2h-3zM202 695h3v2h-3zM206 695h3v2h-3zM198 699h3v2h-3zM202 699h3v2h-3zM206 699h3v2h-3z" fill="#dde6ec"/>
<rect x="239" y="686" width="19" height="13" fill="#4d88c9" stroke="#cfd8e0"/><path d="M241 692h15v3h-15z" fill="#cfe0f0"/><path d="M245 702h9l-2-3h-5z" fill="#a8b0b8"/><circle cx="250" cy="702" r="3" fill="#dfe3e6"/>
<circle cx="294" cy="695" r="11" fill="#1b9de2"/><path d="M284 698c2-8 12-11 17-7 3 2 3 6 1 7h-7c1 3 6 4 10 2-3 6-11 7-15 3-2-2-3-4-6-5z" fill="#0d5a9e"/><path d="M286 691c3-5 12-8 18-2 1 2 1 3 1 5-2-4-8-6-13-3-3 1-4 3-4 5z" fill="#53d08a"/>
<rect x="340" y="686" width="8" height="8" fill="#2a3fc0" stroke="#ddd"/><rect x="331" y="696" width="9" height="8" fill="#2a3fc0" stroke="#ddd"/><path d="M334 695l10-3M336 693l8 8" stroke="#e8c820" stroke-width="1.500"/><path d="M331 706h11" stroke="#fff" stroke-width="2"/>
<rect x="374" y="684" width="23" height="23" rx="3" fill="#1788c8"/><text x="385.500" y="702" style="font-size:15px;font-weight:bold;fill:#fff;text-anchor:middle">U</text>
<rect x="422" y="686" width="18" height="17" fill="#3a9ad9"/><circle cx="428" cy="693" r="3.500" fill="#f0c040"/><path d="M433 690h5M433 694h5M433 698h5" stroke="#dfeaf5"/>
<path d="M469 685h10l4 4v17h-14z" fill="#f4f4f4"/>
<path d="M513 687h8l2 3h7v14h-17z" fill="#f0c040"/><rect x="513" y="691" width="17" height="4" fill="#f8dd7a"/><rect x="519" y="698" width="6" height="4" fill="#2d8fd5"/>
<rect x="559" y="688" width="12" height="15" fill="#7d2f8e"/><path d="M571 686h5v19h-5z" fill="#b56bc4"/><text x="565" y="700" style="font-size:11px;font-weight:bold;fill:#fff;text-anchor:middle">N</text>
<rect x="612" y="686" width="12" height="19" fill="#1f6e43" stroke="#3ba26c"/><path d="M616 686v19M620 686v19" stroke="#9bd0b3"/><text x="608" y="700" style="font-size:12px;font-weight:bold;fill:#fff;text-anchor:middle">X</text>
<rect x="650" y="686" width="13" height="20" fill="#d9472b"/><rect x="660" y="688" width="9" height="15" fill="#f5d5c8"/><text x="656" y="701" style="font-size:12px;font-weight:bold;fill:#fff;text-anchor:middle">P</text>
<rect x="695" y="687" width="14" height="18" fill="#2b579a"/><rect x="706" y="688" width="8" height="16" fill="#cfdcf0"/><text x="701" y="700" style="font-size:11px;font-weight:bold;fill:#fff;text-anchor:middle">W</text>
<ellipse cx="749.500" cy="695.500" rx="10" ry="11" fill="#e0141f"/><ellipse cx="749.500" cy="695.500" rx="4" ry="8" fill="#1a2745"/>
<path d="M787 686l4-2h8l4 2 2 4-2 9-8 7-8-7-2-9z" fill="#f0532a"/><path d="M791 691h3l1 2 1-2h3l-2 6-2 2-2-2z" fill="#fff"/>
<circle cx="841" cy="695" r="11" fill="#e2a321"/><path d="M841 684a11 11 0 0 1 9.500 5.500H841z" fill="#d3392c"/><path d="M830 695a11 11 0 0 1 5-9l5 9 2 11a11 11 0 0 1-12-11z" fill="#3d9a48"/><circle cx="841" cy="695" r="4.500" fill="#3a83e0" stroke="#fff"/><rect x="842" y="696" width="10" height="8" fill="#d5403b"/>
<!-- tray -->
<path d="M1027 699l5-5 5 5" fill="none" stroke="#fff" stroke-width="1.300"/>
<rect x="1049.500" y="691.500" width="10" height="8" fill="none" stroke="#fff"/><path d="M1047 690v6M1049 693h-4" stroke="#fff"/>
<path d="M1070 689l7-2 7 2v7c0 4-4 7-7 8-3-1-7-4-7-8z" fill="#fff"/><path d="M1077 687v17M1070 695h14" stroke="#222"/><circle cx="1081" cy="701" r="3.500" fill="#1a8f3f"/>
<path d="M1093 702v-5h1.500v5zM1096 702v-9h1.500v9zM1099 702v-13h1.500v13zM1102 702v-8h1.500v8zM1105 702v-5h1.500v5z" fill="#4a48d8"/>
<path d="M1117 703a11 11 0 0 1 11-11M1120 703a8 8 0 0 1 8-8M1123 703a5 5 0 0 1 5-5" fill="none" stroke="#bbb" stroke-width="1"/><circle cx="1127" cy="702" r="1.200" fill="#bbb"/>
<path d="M1137 693h3l3-3v12l-3-3h-3z" fill="none" stroke="#fff"/><path d="M1146 692a5 5 0 0 1 0 8M1148 690a8 8 0 0 1 0 12" fill="none" stroke="#bbb" stroke-width=".9"/>
<text x="1160" y="691" style="font-size:11px;fill:#fff" textLength="54" lengthAdjust="spacingAndGlyphs">08:10 p. m.</text>
<text x="1161" y="709" style="font-size:11px;fill:#fff" textLength="54" lengthAdjust="spacingAndGlyphs">12/11/2022</text>
<path d="M1232 687.500h14v13h-4l-3 3-3-3h-4z" fill="none" stroke="#fff" stroke-width="1.200"/>
</svg>
</body></html>
